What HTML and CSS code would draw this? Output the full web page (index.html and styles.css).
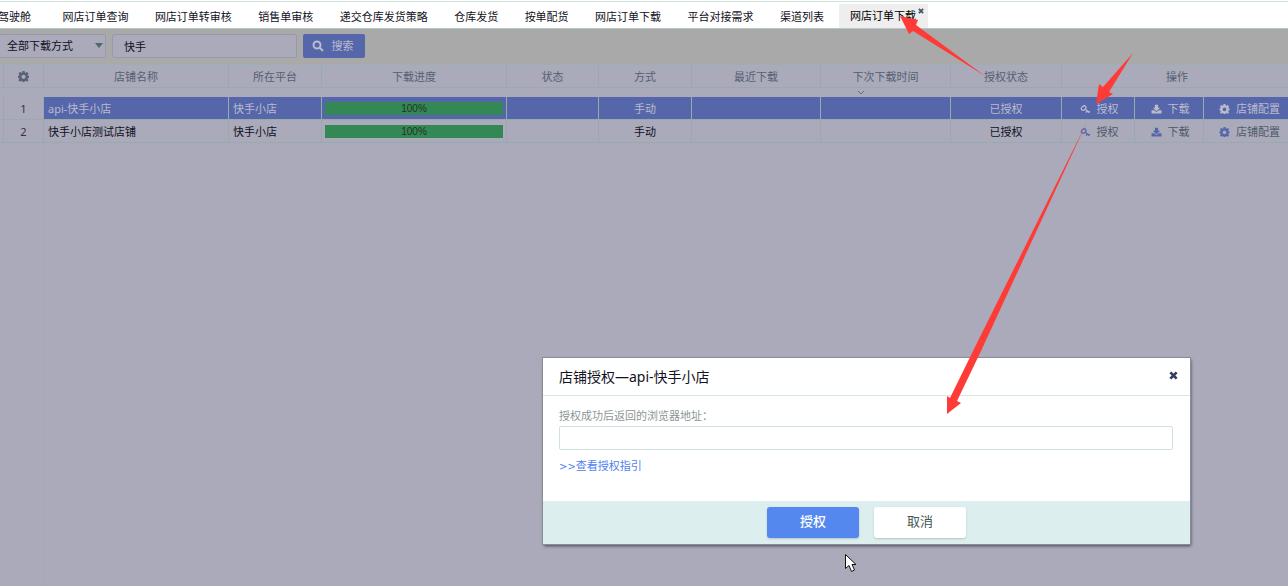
FILE: index.html
```html
<!DOCTYPE html>
<html lang="zh-CN">
<head>
<meta charset="utf-8">
<title>网店订单下载</title>
<link rel="stylesheet" href="styles.css">
</head>
<body>
<svg class="defs" aria-hidden="true">
  <symbol id="gear" viewBox="0 0 16 16"><path fill="currentColor" fill-rule="evenodd" d="M6.500 0h3l.5 2.200 1.200.5 2-1.200 2.100 2.100-1.300 2 .5 1.200L16 7v3l-1.500.2-.5 1.200 1.300 2-2.100 2.100-2-1.300-1.200.5L9.500 16h-3L6 14.700l-1.200-.5-2 1.300L.700 13.400l1.300-2-.5-1.200L0 10V7l1.500-.2.5-1.200-1.300-2 2.100-2.100 2 1.200L6 2.200zM8 5.500a3 3 0 1 0 0 6 3 3 0 0 0 0-6z"/></symbol>
  <symbol id="key" viewBox="0 0 16 16"><g fill="none" stroke="currentColor"><ellipse cx="5" cy="6.500" rx="3" ry="4" stroke-width="2" transform="rotate(50 5 6.500)"/><path stroke-width="2" d="M7.500 8l6.500 6M10.500 11.500l-2 2M13 13.500l2-2"/></g></symbol>
  <symbol id="download" viewBox="0 0 16 16"><path fill="currentColor" d="M5.500 1h5v5H14l-6 5.500L2 6h3.500zM0 10h4.500L7 12.500h2L11.500 10H16v5H0z"/></symbol>
  <symbol id="cross" viewBox="0 0 10 10"><path stroke="currentColor" stroke-width="3" d="M1.500 1.500l7 7M8.500 1.500l-7 7"/></symbol>
</svg>

<nav class="tabs">
  <div class="tab-list">
    <a class="tab tab-first" href="#">驾驶舱</a>
    <a class="tab" href="#">网店订单查询</a>
    <a class="tab" href="#">网店订单转审核</a>
    <a class="tab" href="#">销售单审核</a>
    <a class="tab" href="#">递交仓库发货策略</a>
    <a class="tab" href="#">仓库发货</a>
    <a class="tab" href="#">按单配货</a>
    <a class="tab" href="#">网店订单下载</a>
    <a class="tab" href="#">平台对接需求</a>
    <a class="tab" href="#">渠道列表</a>
  </div>
  <div class="tab-active">
    <a href="#">网店订单下载</a>
    <button class="tab-close" aria-label="关闭标签"><svg><use href="#cross"/></svg></button>
  </div>
</nav>

<form class="filters">
  <div class="select-box">
    <select aria-label="下载方式"><option>全部下载方式</option></select>
  </div>
  <input class="keyword" type="text" value="快手" aria-label="店铺关键字">
  <button class="search" type="button">
    <svg viewBox="0 0 12 12"><g fill="none" stroke="currentColor" stroke-width="2"><circle cx="5" cy="5" r="3.500"/><path d="M7.500 7.500l3.500 3.500"/></g></svg>
    搜索
  </button>
</form>

<main class="grid">
  <table>
    <colgroup>
      <col class="c-num"><col class="c-wide"><col class="c-mid"><col class="c-wide"><col class="c-state"><col class="c-mid">
      <col class="c-last"><col class="c-next"><col class="c-auth"><col class="c-act"><col class="c-act2"><col>
    </colgroup>
    <thead>
      <tr>
        <th><svg class="icon-head" role="img" aria-label="设置"><use href="#gear"/></svg></th>
        <th>店铺名称</th><th>所在平台</th><th>下载进度</th><th>状态</th><th>方式</th><th>最近下载</th><th>下次下载时间</th><th>授权状态</th><th class="ops" colspan="3">操作</th>
      </tr>
    </thead>
    <tbody>
      <tr class="spacer">
        <td colspan="12"><svg class="chevron" viewBox="0 0 8 5"><path d="M1 1l3 3 3-3"/></svg></td>
      </tr>
      <tr class="selected">
        <td class="num">1</td>
        <td class="left">api-快手小店</td>
        <td class="left">快手小店</td>
        <td class="progress"><div class="bar">100%</div></td>
        <td></td><td>手动</td><td></td><td></td><td>已授权</td>
        <td><button class="action"><svg><use href="#key"/></svg>授权</button></td>
        <td><button class="action"><svg><use href="#download"/></svg>下载</button></td>
        <td class="config"><button class="action"><svg><use href="#gear"/></svg>店铺配置</button></td>
      </tr>
      <tr>
        <td class="num">2</td>
        <td class="left">快手小店测试店铺</td>
        <td class="left">快手小店</td>
        <td class="progress"><div class="bar">100%</div></td>
        <td></td><td>手动</td><td></td><td></td><td>已授权</td>
        <td><button class="action"><svg><use href="#key"/></svg>授权</button></td>
        <td><button class="action"><svg><use href="#download"/></svg>下载</button></td>
        <td class="config"><button class="action"><svg><use href="#gear"/></svg>店铺配置</button></td>
      </tr>
    </tbody>
  </table>
  <div class="gutter"></div>
</main>

<section class="dialog" role="dialog" aria-labelledby="dialog-title">
  <header>
    <h2 id="dialog-title">店铺授权—api-快手小店</h2>
    <button class="dialog-close" aria-label="关闭"><svg><use href="#cross"/></svg></button>
  </header>
  <div class="dialog-body">
    <label for="return-url">授权成功后返回的浏览器地址：</label>
    <input id="return-url" type="text">
    <a href="#"><span class="marks">&gt;&gt;</span>查看授权指引</a>
  </div>
  <footer>
    <button class="primary">授权</button>
    <button class="secondary">取消</button>
  </footer>
</section>

<svg class="arrows" width="1288" height="586" viewBox="0 0 1288 586" aria-hidden="true">
  <g fill="#ff3b38">
    <path d="M900 16l18 4-2 5 69 51-72-45-4 3z"/>
    <path d="M1096 104l3-20 4 3 30-34-24 39 4 2z"/>
    <path d="M947 414v-18l3 2 24-49L1087 122 981 351l-24 50 4 2z"/>
  </g>
  <path fill="#fff" stroke="#111" d="M845.500 554.500v14l3.500-3 2.500 6 3-1.500-2.500-5.500h4z"/>
</svg>
</body>
</html>
```
FILE: styles.css
```css
* {
  box-sizing: border-box;
}

body {
  margin: 0;
  height: 100vh;
  display: flex;
  flex-direction: column;
  overflow: hidden;
  background: #aaaabb;
  color: #111122;
  font: 11px/16px "Noto Sans", "Noto Sans CJK SC", sans-serif;
}

button,
input,
select {
  font: inherit;
  color: inherit;
  margin: 0;
  border: 0;
}

button {
  background: none;
  padding: 0;
}

a {
  color: inherit;
  text-decoration: none;
}

.defs {
  position: absolute;
  width: 0;
  height: 0;
}

.tabs {
  display: flex;
  height: 29px;
  flex: none;
  overflow: hidden;
  background: #fff;
  border-top: 1px solid #fff;
  border-bottom: 1px solid #b4c8c4;
  box-shadow: inset 0 1px #cfe2de;
  white-space: nowrap;
}

.tab-list {
  display: flex;
  flex: none;
  justify-content: space-between;
  width: 837px;
}

.tab {
  padding: 8px 13px 0;
}

.tab-first {
  margin-left: -15px;
  margin-right: 5px;
}

.tab-active {
  position: relative;
  margin-left: 2px;
  margin-top: 3px;
  padding: 4px 12px 0 11px;
  background: #eee;
  color: #000;
}

.tab-close {
  position: absolute;
  top: 4px;
  right: 4px;
  width: 6px;
  height: 6px;
  color: #445566;
}

.tab-close svg,
.dialog-close svg {
  display: block;
  width: 100%;
  height: 100%;
}

.filters {
  display: flex;
  flex: none;
  gap: 6px;
  padding: 5px 0 6px;
  background: #a9a9a9;
}

.select-box {
  position: relative;
  width: 106px;
}

.select-box::after {
  content: "";
  position: absolute;
  top: 9px;
  right: 3px;
  border: 4px solid transparent;
  border-top: 5px solid #4f6a6a;
  border-bottom: 0;
}

.select-box select {
  appearance: none;
  width: 100%;
  height: 24px;
  padding: 0 7px;
  background: #aaaabb;
  border: 1px solid #9999aa;
  border-left: 0;
  border-radius: 0 2px 2px 0;
}

.keyword {
  width: 185px;
  height: 24px;
  padding: 0 11px;
  background: #aaaabb;
  border: 1px solid #9999aa;
  border-radius: 2px;
}

.search {
  display: flex;
  align-items: center;
  justify-content: center;
  gap: 8px;
  width: 62px;
  height: 24px;
  padding-right: 3px;
  border-radius: 2px;
  background: #5566aa;
  color: #bbbbcc;
}

.search svg {
  width: 12px;
  height: 12px;
}

.grid {
  flex: 1;
  display: flex;
  flex-direction: column;
  overflow: hidden;
}

table {
  width: 100%;
  table-layout: fixed;
  border-collapse: separate;
  border-spacing: 0;
  border-top: 1px solid #9eafb2;
}

.c-num { width: 44px; }
.c-wide { width: 185px; }
.c-mid { width: 93px; }
.c-state { width: 92px; }
.c-last { width: 129px; }
.c-next { width: 130px; }
.c-auth { width: 111px; }
.c-act { width: 73px; }
.c-act2 { width: 69px; }

th,
td {
  height: 23px;
  padding: 1px 0 0;
  border-right: 1px solid #99aaae;
  border-bottom: 1px solid #99aaae;
  text-align: center;
  font-weight: 400;
  white-space: nowrap;
  overflow: hidden;
}

th {
  color: #556070;
}

th:first-child,
.num {
  padding-left: 4px;
  background: linear-gradient(#99aaae, #99aaae) 3px 0 / 1px 100% no-repeat;
}

th:last-child,
td:last-child {
  border-right: 0;
}

.ops {
  padding-left: 4px;
}

.num {
  color: #333344;
}

.icon-head {
  display: block;
  width: 11px;
  height: 11px;
  margin: auto;
  color: #596275;
}

.spacer td {
  height: 9px;
  padding: 0;
  border: 0;
  line-height: 0;
}

.chevron {
  display: block;
  width: 8px;
  height: 5px;
  margin-left: 857px;
  fill: none;
  stroke: #667080;
}

.left {
  padding-left: 4px;
  text-align: left;
}

.selected td:not(.num) {
  background: #5566aa;
  color: #bbbbcc;
}

.progress {
  padding: 0 3px;
}

.bar {
  height: 13px;
  background: #338855;
  color: #223322;
  font: 10px/13px "Liberation Sans", sans-serif;
}

.action {
  display: flex;
  align-items: center;
  justify-content: center;
  gap: 6px;
  width: 100%;
  padding-left: 2px;
  color: #4f5b68;
}

.action svg {
  width: 11px;
  height: 10px;
  color: #5566aa;
}

.selected .action,
.selected .action svg {
  color: #bbbbcc;
}

.config .action {
  justify-content: flex-start;
  padding-left: 15px;
}

.gutter {
  flex: 1;
  width: 44px;
  border-right: 1px solid #a0a9b5;
}

.dialog {
  position: absolute;
  top: 358px;
  right: 98px;
  width: 647px;
  background: #fff;
  box-shadow: 0 0 0 1px #888c94, 1px 2px 3px #445;
}

.dialog header {
  display: flex;
  align-items: center;
  justify-content: space-between;
  height: 38px;
  padding: 0 12px 0 16px;
  border-bottom: 1px solid #d5e6e6;
}

.dialog h2 {
  margin: 0;
  font-size: 14px;
  font-weight: 400;
  line-height: 20px;
}

.dialog-close {
  width: 9px;
  height: 9px;
  margin-bottom: 2px;
  color: #333b60;
}

.dialog-body {
  display: flex;
  flex-direction: column;
  align-items: flex-start;
  padding: 12px 17px 26px 16px;
}

.dialog label {
  color: #8b9696;
}

.dialog input {
  width: 100%;
  height: 24px;
  margin: 2px 0 8px;
  padding: 0 6px;
  border: 1px solid #cfe0e0;
  border-radius: 2px;
}

.dialog-body a {
  color: #4f7fee;
}

.marks {
  font-family: "DejaVu Sans", sans-serif;
  font-size: 10px;
}

.dialog footer {
  display: flex;
  justify-content: center;
  gap: 15px;
  padding: 6px 0;
  background: #dceeee;
}

.dialog footer button {
  width: 92px;
  height: 31px;
  padding-bottom: 3px;
  border-radius: 3px;
  font-size: 13px;
  box-shadow: 0 1px 2px #b8c4cc;
}

.dialog .primary {
  background: #5588ee;
  color: #fff;
  font-weight: 500;
}

.dialog .secondary {
  background: #fff;
  color: #445555;
}

.arrows {
  position: absolute;
  top: 0;
  left: 0;
  pointer-events: none;
}
```
